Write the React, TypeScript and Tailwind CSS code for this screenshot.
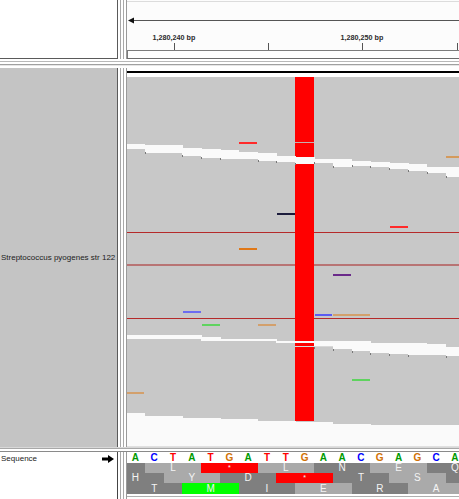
import React from "react";

const BP = 18.8;
const X0 = -1;
const TOP = 68;

const seq = "ACTATGATTGAACGAGCA";
const baseColor: Record<string, string> = {
  A: "text-[#009a00]",
  C: "text-[#0000ff]",
  T: "text-[#ff0000]",
  G: "text-[#d17105]",
};

type Tone = "dark" | "light" | "red" | "green";
const toneClass: Record<Tone, string> = {
  dark: "bg-[#7f7f7f]",
  light: "bg-[#aaaaaa]",
  red: "bg-[#ff0000]",
  green: "bg-[#00ff00]",
};

const frames: { start: number; h: string; codons: [string, Tone][] }[] = [
  {
    start: -2,
    h: "h-[10px]",
    codons: [["", "dark"], ["L", "light"], ["*", "red"], ["L", "light"], ["N", "dark"], ["E", "light"], ["Q", "dark"]],
  },
  {
    start: -1,
    h: "h-[10px]",
    codons: [["H", "dark"], ["Y", "light"], ["D", "dark"], ["*", "red"], ["T", "dark"], ["S", "light"], ["", "dark"]],
  },
  {
    start: 0,
    h: "h-[11px]",
    codons: [["T", "dark"], ["M", "green"], ["I", "dark"], ["E", "light"], ["R", "dark"], ["A", "light"]],
  },
];

// white gaps between packed reads: [top, bottom] per base column (page y)
const band1 = [
  [144, 149], [145, 153], [145, 153], [148, 156], [149, 158], [150, 159], [152, 159], [153, 161], [156, 162],
  [157, 164], [159, 163], [159, 167], [161, 166], [162, 167], [163, 169], [164, 171], [167, 173], [167, 177],
];
const band2 = [
  [335, 339], [335, 339], [335, 339], [335, 339], [337, 341], [339, 341], [339, 341], [339, 341], [341, 343],
  [341, 343], [341, 347], [341, 349], [341, 351], [343, 353], [343, 354], [343, 355], [344, 355], [347, 356],
];
const band3 = [413, 416, 416, 418, 418, 419, 419, 421, 421, 422, 422, 424, 424, 425, 425, 425, 425, 425];

const mismatches: [number, number, number, string][] = [
  // [base, page y, bases wide, colour]
  [6, 142, 1, "#ff2a2a"],
  [17, 156, 1, "#d49a5c"],
  [8, 213, 1, "#1c1c3c"],
  [14, 226, 1, "#ff2a2a"],
  [6, 248, 1, "#e07818"],
  [11, 274, 1, "#6a2a8a"],
  [3, 311, 1, "#6c6cf0"],
  [10, 314, 1, "#5c5cf2"],
  [11, 314, 2, "#d3a06c"],
  [4, 324, 1, "#5fd35f"],
  [7, 324, 1, "#d3a06c"],
  [12, 379, 1, "#5fd35f"],
  [0, 392, 1, "#d3a06c"],
];

const bx = (j: number) => X0 + BP * j;

const Divider = () => (
  <div className="w-[9px] shrink-0 flex bg-white">
    <div className="w-[2px]" />
    <div className="w-[1px] bg-[#a8a8a8]" />
    <div className="w-[2px]" />
    <div className="w-[1px] bg-[#a8a8a8]" />
    <div className="w-[2px]" />
    <div className="w-[1px] bg-[#9a9a9a]" />
  </div>
);

const Ruler = () => (
  <svg width={332} height={59} className="block bg-[#fcfcfc]" shapeRendering="crispEdges">
    <rect x={0} y={1} width={332} height={1} fill="#dcdcdc" />
    <rect x={4} y={20} width={328} height={1} fill="#555" />
    <polygon points="1,20.5 7,17.5 7,23.5" fill="#111" shapeRendering="auto" />
    {[
      [47, "1,280,240 bp"],
      [235, "1,280,250 bp"],
    ].map(([x, t]) => (
      <text key={t} x={x} y={40} textAnchor="middle" fill="#2a2a2a" className="text-[7.2px] font-bold">
        {t}
      </text>
    ))}
    {[47, 141, 235, 330].map((x) => (
      <rect key={x} x={x} y={43} width={1} height={7} fill="#555" />
    ))}
    <rect x={0} y={50} width={332} height={1} fill="#7a7a7a" />
    <rect x={0} y={50} width={1} height={9} fill="#7a7a7a" />
    <rect x={0} y={58} width={332} height={1} fill="#6a6a6a" />
  </svg>
);

const Alignments = () => (
  <svg width={332} height={379} className="block" shapeRendering="crispEdges">
    <rect x={0} y={0} width={332} height={379} fill="#fff" />
    <rect x={0} y={3} width={332} height={2} fill="#000" />
    <rect x={0} y={77 - TOP} width={332} height={379} fill="#c8c8c8" />
    <rect x={0} y={232 - TOP} width={332} height={1} fill="#b52a2a" />
    <rect x={0} y={264 - TOP} width={332} height={2} fill="#b87474" />
    <rect x={0} y={318 - TOP} width={332} height={1} fill="#b52a2a" />
    <rect x={bx(9)} y={77 - TOP} width={BP} height={421 - 77} fill="#ff0000" />
    <rect x={bx(9)} y={142 - TOP} width={BP} height={1} fill="#c4b0b0" />
    {band1.map(([t, b], j) => (
      <rect key={"a" + j} x={bx(j)} y={t - TOP} width={BP + 0.5} height={b - t} fill="#fafafa" />
    ))}
    {band2.map(([t, b], j) => (
      <rect key={"b" + j} x={bx(j)} y={t - TOP} width={BP + 0.5} height={b - t} fill="#fafafa" />
    ))}
    <rect x={bx(9)} y={346 - TOP} width={BP * 2} height={1} fill="#d8d8d8" />
    {band3.map((t, j) => (
      <rect key={"c" + j} x={bx(j)} y={t - TOP} width={BP + 0.5} height={379} fill="#fafafa" />
    ))}
    {band1.map(([, b], j) =>
      j > 0 && b !== band1[j - 1][1] ? (
        <rect key={"ta" + j} x={bx(j)} y={b - TOP - 1} width={1} height={2} fill="#777" />
      ) : null
    )}
    {band2.map(([, b], j) =>
      j > 9 && b !== band2[j - 1][1] ? (
        <rect key={"tb" + j} x={bx(j)} y={b - TOP} width={1} height={2} fill="#777" />
      ) : null
    )}
    {mismatches.map(([j, y, n, c]) => (
      <rect key={j + "-" + y} x={bx(j) + 0.5} y={y - TOP} width={BP * n - 1} height={2} fill={c} />
    ))}
    <rect x={0} y={378} width={332} height={1} fill="#e0e0e0" />
  </svg>
);

const SequenceTrack = () => (
  <div className="flex flex-col overflow-hidden w-[332px] h-[47px] bg-white">
    <div className="flex h-[11px] items-center ml-[-1px]">
      {seq.split("").map((b, i) => (
        <div
          key={i}
          className={`shrink-0 text-center text-[10px] font-bold leading-none ${baseColor[b]}`}
          style={{ width: BP }}
        >
          {b}
        </div>
      ))}
    </div>
    {frames.map((f, k) => (
      <div key={k} className={`flex ${f.h}`} style={{ marginLeft: X0 + BP * f.start }}>
        {f.codons.map(([aa, tone], i) => (
          <div
            key={i}
            className={`shrink-0 flex items-center justify-center leading-none text-[#f4f4f4] ${toneClass[tone]} ${
              aa === "*" ? "text-[7px] items-start pt-[1px]" : "text-[10px]"
            }`}
            style={{ width: BP * 3 }}
          >
            {aa}
          </div>
        ))}
      </div>
    ))}
    <div className="h-[2px]" />
    <div className="h-[1px] bg-[#b0b0b0]" />
  </div>
);

export default function App() {
  return (
    <div className="w-[459px] h-[499px] overflow-hidden bg-white flex flex-col font-['Liberation_Sans',Arial,sans-serif] text-[#222]">
      {/* ruler */}
      <div className="flex h-[59px] shrink-0">
        <div className="w-[118px] shrink-0 bg-white border-r border-b border-[#5a5a5a]" />
        <Divider />
        <Ruler />
      </div>
      {/* splitter */}
      <div className="h-[9px] shrink-0 flex flex-col">
        <div className="h-[2px] bg-white" />
        <div className="h-[1px] bg-[#b8b8b8]" />
        <div className="h-[2px] bg-white" />
        <div className="h-[1px] bg-[#a0a0a0]" />
        <div className="h-[1px] bg-[#e6e6e6]" />
        <div className="h-[2px] bg-white" />
      </div>
      {/* alignments */}
      <div className="flex h-[379px] shrink-0">
        <div className="w-[118px] shrink-0 bg-[#c4c4c4] border-r border-[#5a5a5a] flex items-center pl-[1px]">
          <span className="text-[8px] whitespace-nowrap text-[#222]">Streptococcus pyogenes str 122</span>
        </div>
        <Divider />
        <Alignments />
      </div>
      {/* splitter */}
      <div className="h-[5px] shrink-0 flex flex-col">
        <div className="h-[1px] bg-[#d8d8d8]" />
        <div className="h-[1px] bg-[#a8a8a8]" />
        <div className="h-[2px] bg-white" />
        <div className="h-[1px] bg-[#8a8a8a]" />
      </div>
      {/* sequence */}
      <div className="flex h-[47px] shrink-0">
        <div className="w-[118px] shrink-0 bg-white border-r border-[#444] flex items-start justify-between pl-[1px] pr-[3px] pt-[2px]">
          <span className="text-[8px] leading-[10px] text-[#222]">Sequence</span>
          <svg width={12} height={8} viewBox="0 0 12 8" className="mt-[1px]">
            <rect x={0} y={2.5} width={7} height={3} fill="#000" />
            <polygon points="6,0 12,4 6,8" fill="#000" />
          </svg>
        </div>
        <Divider />
        <SequenceTrack />
      </div>
    </div>
  );
}
